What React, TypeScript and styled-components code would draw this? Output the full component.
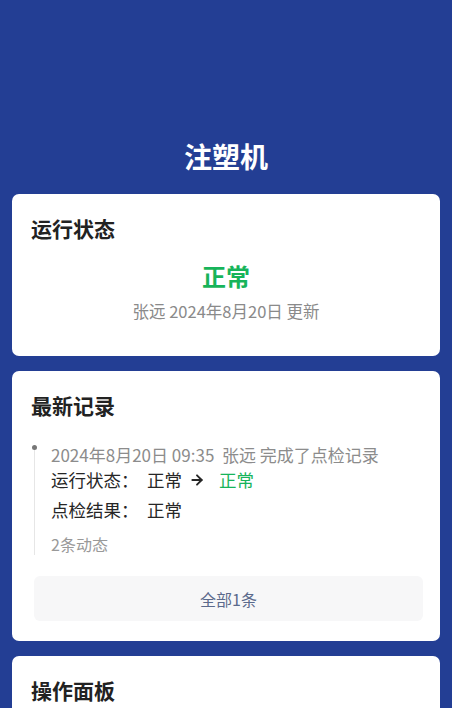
import React from "react";
import styled, { createGlobalStyle } from "styled-components";
import { ArrowRight } from "lucide-react";

const GlobalStyle = createGlobalStyle`
  html, body {
    margin: 0;
    padding: 0;
    background: #233e94;
    font-family: "Noto Sans CJK SC", "Noto Sans", sans-serif;
  }
`;

interface RecordType {
  time: string;
  user: string;
  action: string;
  before: string;
  after: string;
  result: string;
  count: number;
}

const record: RecordType = {
  time: "2024年8月20日 09:35",
  user: "张远",
  action: "完成了点检记录",
  before: "正常",
  after: "正常",
  result: "正常",
  count: 2,
};

function App() {
  return (
    <>
      <GlobalStyle />
      <Page>
        <Title>注塑机</Title>

        <Card>
          <CardTitle>运行状态</CardTitle>
          <StatusValue>正常</StatusValue>
          <StatusMeta>张远 2024年8月20日 更新</StatusMeta>
        </Card>

        <Card>
          <CardTitle>最新记录</CardTitle>
          <Timeline>
            <Dot />
            <RecordHead>
              {record.time}&nbsp;&nbsp;{record.user} {record.action}
            </RecordHead>
            <RecordRow>
              <RowLabel>运行状态：</RowLabel>
              <span>{record.before}</span>
              <Arrow>
                <ArrowRight size={16} strokeWidth={2.8} />
              </Arrow>
              <Green>{record.after}</Green>
            </RecordRow>
            <RecordRow>
              <RowLabel>点检结果：</RowLabel>
              <span>{record.result}</span>
            </RecordRow>
            <RecordFoot>{record.count}条动态</RecordFoot>
          </Timeline>
          <AllButton>全部1条</AllButton>
        </Card>

        <Card $tall>
          <CardTitle>操作面板</CardTitle>
        </Card>
      </Page>
    </>
  );
}

const Page = styled("div")`
  display: flex;
  flex-direction: column;
  gap: 15px;
  padding: 136px 12px 40px;
  min-height: 708px;
  box-sizing: border-box;
`;

const Title = styled("div")`
  color: #ffffff;
  font-size: 28px;
  font-weight: 700;
  line-height: 40px;
  text-align: center;
  margin-bottom: 3px;
`;

const Card = styled("div")<{ $tall?: boolean }>`
  display: flex;
  flex-direction: column;
  background: #ffffff;
  border-radius: 7px;
  padding: 19px 19px ${({ $tall }) => ($tall ? "160px" : "20px")};
`;

const CardTitle = styled("div")`
  font-size: 21px;
  font-weight: 700;
  line-height: 30px;
  color: #222222;
`;

const StatusValue = styled("div")`
  margin-top: 16px;
  text-align: center;
  font-size: 24px;
  font-weight: 700;
  line-height: 34px;
  color: #17b45a;
`;

const StatusMeta = styled("div")`
  margin: 6px 0 13px;
  text-align: center;
  font-size: 16.5px;
  line-height: 24px;
  color: #8a8a8a;
`;

const Timeline = styled("div")`
  position: relative;
  margin: 25px 0 0 3px;
  padding-left: 16px;
  border-left: 1px solid #e6e6e6;
  border-top: 5px solid #ffffff;
`;

const Dot = styled("span")`
  position: absolute;
  left: -3px;
  top: -5px;
  width: 5px;
  height: 5px;
  border-radius: 50%;
  background: #777777;
`;

const RecordHead = styled("div")`
  font-size: 17px;
  line-height: 20px;
  color: #8c8c8c;
  margin-top: -5px;
  white-space: nowrap;
`;

const RecordRow = styled("div")`
  display: flex;
  align-items: center;
  font-size: 17.5px;
  line-height: 30px;
  color: #262626;
`;

const RowLabel = styled("span")`
  width: 96px;
`;

const Arrow = styled("span")`
  display: flex;
  align-items: center;
  margin: 0 14px 0 7px;
  color: #262626;
`;

const Green = styled("span")`
  color: #17b45a;
`;

const RecordFoot = styled("div")`
  margin-top: 8px;
  font-size: 16px;
  line-height: 22px;
  color: #999999;
`;

const AllButton = styled("div")`
  margin: 21px -2px 0 3px;
  height: 45px;
  display: flex;
  align-items: center;
  justify-content: center;
  background: #f7f7f8;
  border-radius: 6px;
  font-size: 16px;
  color: #5b6a8c;
`;

export default App;
